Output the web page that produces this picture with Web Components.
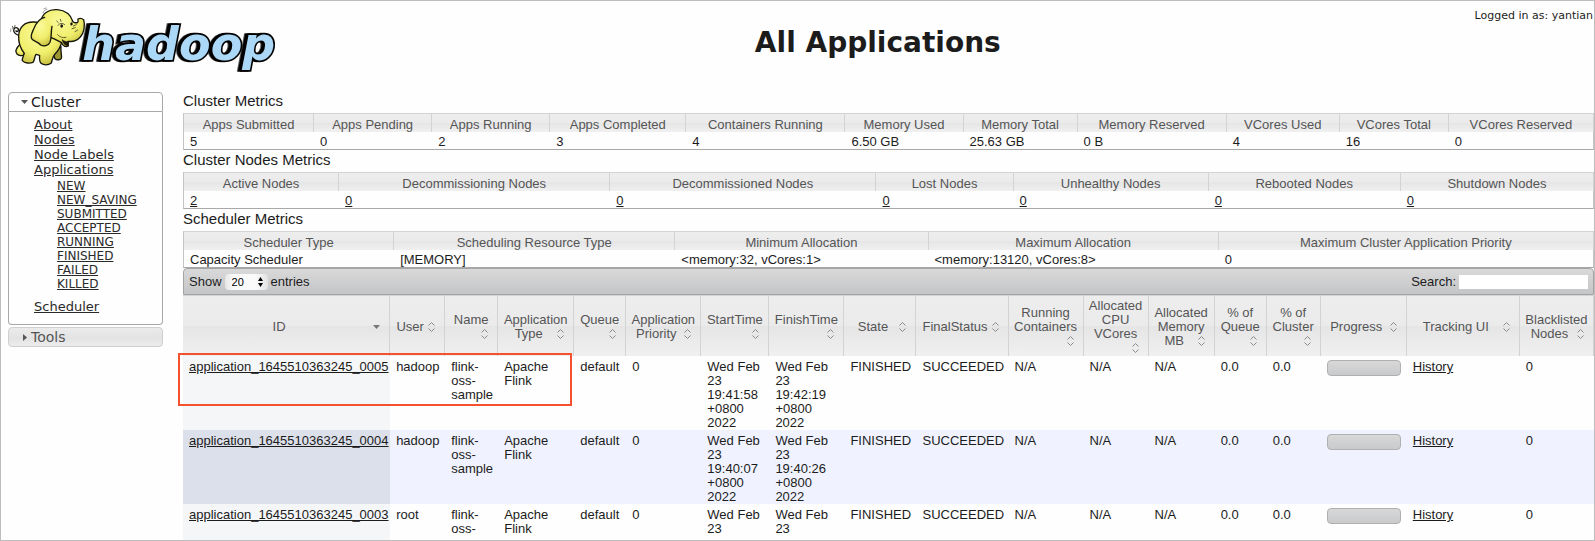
<!DOCTYPE html>
<html lang="en">
<head>
<meta charset="utf-8">
<title>All Applications</title>
<style>
  body {
    margin: 0;
    background: #fefefe;
    color: #1c1c1c;
    font-family: "Liberation Sans", Arial, Helvetica, sans-serif;
    font-size: 13px;
  }
</style>
</head>
<body>
<yarn-page user="yantian">
  <hadoop-logo slot="logo"></hadoop-logo>
  <span slot="title">All Applications</span>
  <nav-accordion slot="nav"></nav-accordion>
  <metrics-table name="cluster"></metrics-table>
  <metrics-table name="nodes"></metrics-table>
  <metrics-table name="scheduler"></metrics-table>
  <apps-table></apps-table>
</yarn-page>

<script>
/**
 * ResourceManager "All Applications" page
 */

const metrics = {
  cluster: {
    title: 'Cluster Metrics',
    columns: [
      { label: 'Apps Submitted', width: 131, value: '5' },
      { label: 'Apps Pending', width: 118, value: '0' },
      { label: 'Apps Running', width: 118, value: '2' },
      { label: 'Apps Completed', width: 136, value: '3' },
      { label: 'Containers Running', width: 159, value: '4' },
      { label: 'Memory Used', width: 118, value: '6.50 GB' },
      { label: 'Memory Total', width: 114, value: '25.63 GB' },
      { label: 'Memory Reserved', width: 149, value: '0 B' },
      { label: 'VCores Used', width: 113, value: '4' },
      { label: 'VCores Total', width: 109, value: '16' },
      { label: 'VCores Reserved', width: 145, value: '0' }
    ]
  },
  nodes: {
    title: 'Cluster Nodes Metrics',
    links: true,
    columns: [
      { label: 'Active Nodes', width: 156, value: '2' },
      { label: 'Decommissioning Nodes', width: 271, value: '0' },
      { label: 'Decommissioned Nodes', width: 266, value: '0' },
      { label: 'Lost Nodes', width: 137, value: '0' },
      { label: 'Unhealthy Nodes', width: 195, value: '0' },
      { label: 'Rebooted Nodes', width: 192, value: '0' },
      { label: 'Shutdown Nodes', width: 193, value: '0' }
    ]
  },
  scheduler: {
    title: 'Scheduler Metrics',
    columns: [
      { label: 'Scheduler Type', width: 211, value: 'Capacity Scheduler' },
      { label: 'Scheduling Resource Type', width: 281, value: '[MEMORY]' },
      { label: 'Minimum Allocation', width: 253, value: '&lt;memory:32, vCores:1&gt;' },
      { label: 'Maximum Allocation', width: 290, value: '&lt;memory:13120, vCores:8&gt;' },
      { label: 'Maximum Cluster Application Priority', width: 375, value: '0' }
    ]
  }
};

const appColumns = [
  ['ID', 207], ['User', 55], ['Name', 53], ['Application Type', 76], ['Queue', 52],
  ['Application Priority', 75], ['StartTime', 68], ['FinishTime', 75], ['State', 72],
  ['FinalStatus', 92], ['Running Containers', 75], ['Allocated CPU VCores', 65],
  ['Allocated Memory MB', 66], ['% of Queue', 52], ['% of Cluster', 54],
  ['Progress', 86], ['Tracking UI', 113], ['Blacklisted Nodes', 74]
];

const apps = [
  {
    id: 'application_1645510363245_0005', user: 'hadoop', name: 'flink-oss-sample',
    start: 'Wed Feb 23 19:41:58 +0800 2022', finish: 'Wed Feb 23 19:42:19 +0800 2022', marked: true
  },
  {
    id: 'application_1645510363245_0004', user: 'hadoop', name: 'flink-oss-sample',
    start: 'Wed Feb 23 19:40:07 +0800 2022', finish: 'Wed Feb 23 19:40:26 +0800 2022'
  },
  {
    id: 'application_1645510363245_0003', user: 'root', name: 'flink-oss-',
    start: 'Wed Feb 23', finish: 'Wed Feb 23'
  }
];

class HadoopLogo extends HTMLElement {
  constructor() {
    super();
    this.attachShadow({ mode: 'open' }).innerHTML = `
      <style>
        :host { display: block; }
        svg { display: block; }
        text {
          font: italic bold 138px "DejaVu Sans", Verdana, sans-serif;
          fill: #abd8f6;
          stroke: #000;
          stroke-width: 10px;
          stroke-linejoin: miter;
          paint-order: stroke;
          filter: drop-shadow(-8px 0 0 #000);
        }
      </style>
      <svg width="280" height="80" viewBox="0 0 840 240" role="img" aria-label="hadoop">
        <defs>
          <radialGradient id="skin" cx="0.45" cy="0.3" r="0.75">
            <stop offset="0" stop-color="#fafa9c"/>
            <stop offset="0.6" stop-color="#f1ee6c"/>
            <stop offset="1" stop-color="#c4bb3c"/>
          </radialGradient>
        </defs>
        <text x="244" y="177">hadoop</text>
        <g fill="url(#skin)" stroke="#15150a" stroke-width="4" stroke-linejoin="round" stroke-linecap="round">
          <!-- tail -->
          <path d="M55 103c-12-2-20-11-16-19 4-7 15-4 13 4-1 5-7 4-7 1" fill="none"/>
          <path d="M38 82l-4-6m7 4l1-7" fill="none" stroke-width="2"/>
          <!-- far legs -->
          <path d="M57 130c-8 8-17 20-9 29 6 6 16 6 21 3l6-26z"/>
          <path d="M152 148l10 25c5 5 16 4 19-1 3-7-3-16-1-35z" fill="#9d9632"/>
          <!-- body and near legs -->
          <path d="M98 63C72 62 54 78 53 104c-1 21 5 38 17 53-3 9-7 15-6 22 7 8 22 9 32 5 6-8 4-17 9-24l11 3c-1 9-1 18 4 24 8 6 22 6 30 0 5-9 2-16 12-28 8-8 16-20 20-35L172 68z"/>
          <!-- head and trunk -->
          <path d="M120 60c4-23 23-36 49-34 23 2 40 15 47 36 5 4 10 4 14 2 3-4 0-7 1-10 5-3 12-2 17 2 5 18 1 40-10 52-10 11-24 15-37 13l1 14c-8 4-17 1-20-10l-24-12c-22-8-39-24-38-53z"/>
          <path d="M184 117c6 4 12 6 18 5l0 11c-9 3-15-5-18-16z" fill="#221c08" stroke-width="2"/>
          <!-- ear -->
          <path d="M131 49c-18 4-26 18-32 33-6 14-12 22-7 31 5 8 18 8 27 19 9 5 23 3 28-8 6-16 2-32 6-48"/>
          <!-- face -->
          <g fill="none" stroke-width="2">
            <path d="M171 73c5-7 14-8 20-2m-19-6l-5-5m13 1l-2-6m-8 46c7 8 15 10 25 8"/>
            <path d="M215 62c-7 1-8 7-5 11m7 2l9-4m-13 12l10-3m-1 12l8-5"/>
          </g>
          <ellipse cx="182" cy="75" rx="4" ry="5" fill="#111" stroke="none"/>
          <ellipse cx="212" cy="69" rx="3" ry="4" fill="#111" stroke="none"/>
          <path d="M126 36c1-6 6-10 12-11m-9-2l7-2M29 92v-8m5 0l1-6" fill="none" stroke="#777" stroke-width="2"/>
        </g>
      </svg>
    `;
  }
}

class YarnPage extends HTMLElement {
  constructor() {
    super();
    this.attachShadow({ mode: 'open' });
  }

  connectedCallback() {
    this.shadowRoot.innerHTML = `
      <style>
        :host {
          display: block;
          box-sizing: border-box;
          height: 100vh;
          overflow: hidden;
          border: 1px solid #bdbdbd;
        }

        header {
          display: flex;
          align-items: flex-start;
          height: 90px;
          font-family: "DejaVu Sans", Verdana, sans-serif;
        }

        h1 {
          flex: 1;
          margin: 0;
          padding-top: 24px;
          font-size: 28px;
          line-height: 36px;
          text-align: center;
        }

        .user {
          padding: 7px 1px 0 0;
          font-size: 11px;
          line-height: 16px;
        }

        .columns {
          display: flex;
          align-items: flex-start;
          gap: 20px;
          padding: 0 0 0 7px;
        }

        nav {
          flex: 0 0 155px;
          padding-top: 1px;
        }

        main {
          flex: 1;
          min-width: 0;
        }
      </style>
      <header>
        <slot name="logo"></slot>
        <h1><slot name="title"></slot></h1>
        <div class="user">Logged in as: ${this.getAttribute('user')}</div>
      </header>
      <div class="columns">
        <nav><slot name="nav"></slot></nav>
        <main><slot></slot></main>
      </div>
    `;
  }
}

class NavAccordion extends HTMLElement {
  constructor() {
    super();
    this.attachShadow({ mode: 'open' });
  }

  connectedCallback() {
    const states = ['NEW', 'NEW_SAVING', 'SUBMITTED', 'ACCEPTED', 'RUNNING', 'FINISHED', 'FAILED', 'KILLED'];
    const link = text => `<li><a href="#">${text}</a></li>`;

    this.shadowRoot.innerHTML = `
      <style>
        :host {
          display: flex;
          flex-direction: column;
          gap: 2px;
          font-family: "DejaVu Sans", Verdana, sans-serif;
        }

        button {
          display: flex;
          align-items: center;
          gap: 3px;
          box-sizing: border-box;
          width: 100%;
          height: 20px;
          margin: 0;
          padding: 0 0 0 12px;
          border: 1px solid #cfcfcf;
          border-radius: 4px;
          background: linear-gradient(#ebebec, #e4e4e5 50%, #e2e2e3 50%, #ececed);
          color: #555;
          font: inherit;
          font-size: 14px;
          text-align: left;
        }

        button.open {
          border-color: #a8a8a8;
          border-radius: 4px 4px 0 0;
          background: #fefefe;
          color: #1c1c1c;
        }

        svg {
          width: 7px;
          height: 7px;
          fill: #555;
        }

        .body {
          padding: 5px 0 10px 25px;
          border: 1px solid #a8a8a8;
          border-top: 0;
          border-radius: 0 0 4px 4px;
        }

        ul {
          margin: 0;
          padding: 0;
          list-style: none;
          font-size: 13px;
          line-height: 15px;
        }

        ul ul {
          padding: 2px 0 8px 23px;
          font-size: 12px;
          line-height: 14px;
        }

        a {
          color: #2a2a2a;
        }
      </style>
      <section>
        <button class="open" aria-expanded="true">
          <svg viewBox="0 0 7 7"><path d="M0 1h7L3.500 5z"/></svg>Cluster
        </button>
        <div class="body">
          <ul>
            ${link('About')}
            ${link('Nodes')}
            ${link('Node Labels')}
            <li><a href="#">Applications</a>
              <ul>${states.map(link).join('')}</ul>
            </li>
            ${link('Scheduler')}
          </ul>
        </div>
      </section>
      <button aria-expanded="false">
        <svg viewBox="0 0 7 7"><path d="M2 0v7l4-3.500z"/></svg>Tools
      </button>
    `;
  }
}

// Header cell look shared by every table on the page
const headerCell = `
  table {
    width: 100%;
    table-layout: fixed;
    border-spacing: 0;
    font-size: 13px;
  }

  th {
    border: solid #d3d3d4;
    border-width: 1px 1px 0 0;
    background: linear-gradient(#ededee, #ebebec 50%, #e5e5e6 50%, #f0f0f1);
    color: #555;
    font-weight: normal;
    text-align: center;
  }

  a { color: #1c1c1c; }
`;

class MetricsTable extends HTMLElement {
  constructor() {
    super();
    this.attachShadow({ mode: 'open' });
  }

  connectedCallback() {
    const { title, links, columns } = metrics[this.getAttribute('name')];
    const cell = value => links ? `<a href="#">${value}</a>` : value;

    this.shadowRoot.innerHTML = `
      <style>
        ${headerCell}

        :host { display: block; }

        h3 {
          margin: 0 0 3px;
          font-size: 15px;
          font-weight: normal;
          line-height: 19px;
        }

        th {
          padding: 3px 0 0;
          line-height: 15px;
        }

        td {
          padding: 2px 6px 0;
          border-bottom: 1px solid #a8a8a8;
          line-height: 15px;
        }

        tr > :first-child { border-left: 1px solid #c4c4c4; }
        td:last-child { border-right: 1px solid #c4c4c4; }
      </style>
      <h3>${title}</h3>
      <table aria-label="${title}">
        <colgroup>${columns.map(c => `<col style="width: ${c.width}px">`).join('')}</colgroup>
        <thead><tr>${columns.map(c => `<th scope="col">${c.label}</th>`).join('')}</tr></thead>
        <tbody><tr>${columns.map(c => `<td>${cell(c.value)}</td>`).join('')}</tr></tbody>
      </table>
    `;
  }
}

class SortIcon extends HTMLElement {
  constructor() {
    super();
    this.attachShadow({ mode: 'open' });
  }

  connectedCallback() {
    const shape = this.hasAttribute('active')
      ? '<path d="M3 5h7L6.500 9z" fill="#777"/>'
      : '<path d="M3.500 5.500l3-3 3 3M3.500 8.500l3 3 3-3" fill="none" stroke="#8a8a8a"/>';
    this.shadowRoot.innerHTML = `
      <style>
        :host { display: block; width: 14px; height: 14px; }
        svg { display: block; }
      </style>
      <svg width="14" height="14" viewBox="0 0 14 14">${shape}</svg>
    `;
  }
}

class ProgressBar extends HTMLElement {
  constructor() {
    super();
    this.attachShadow({ mode: 'open' }).innerHTML = `
      <style>
        :host { display: block; }
        div {
          box-sizing: border-box;
          height: 16px;
          border: 1px solid #b0b0b0;
          border-radius: 4px;
          background: linear-gradient(#d8d8d9, #c9cacb);
        }
      </style>
      <div role="progressbar" aria-label="Progress"></div>
    `;
  }
}

class AppsTable extends HTMLElement {
  constructor() {
    super();
    this.attachShadow({ mode: 'open' });
  }

  connectedCallback() {
    this.shadowRoot.innerHTML = `
      <style>
        ${headerCell}

        :host { display: block; }

        .toolbar {
          display: flex;
          align-items: center;
          justify-content: space-between;
          box-sizing: border-box;
          height: 27px;
          padding: 0 5px;
          border: 1px solid #a4a4a4;
          border-radius: 4px 4px 0 0;
          background: linear-gradient(#d9d9da, #c4c5c6);
        }

        .toolbar label {
          display: flex;
          align-items: center;
          gap: 3px;
        }

        .length {
          display: flex;
          align-items: center;
          border-radius: 4px;
          background: linear-gradient(90deg, #e6e6e6, #fafafa 20%, #fafafa 70%, #e2e2e2);
        }

        select {
          appearance: none;
          width: 33px;
          height: 16px;
          padding: 0 0 0 7px;
          border: 0;
          background: none;
          color: #000;
          font: inherit;
          font-size: 11px;
        }

        input {
          box-sizing: border-box;
          width: 129px;
          height: 14px;
          padding: 0 2px;
          border: 0;
          background: #fff;
          font: inherit;
        }

        th {
          height: 58px;
          padding: 2px 5px 0;
          line-height: 14px;
        }

        th sort-icon { float: right; }

        td {
          height: 70px;
          padding: 4px 6px 0;
          line-height: 14px;
          vertical-align: top;
        }

        td.id {
          position: relative;
          background: #f5f6f8;
          white-space: nowrap;
        }

        tbody tr:nth-child(even) { background: #f0f3ff; }
        tbody tr:nth-child(even) .id { background: #dce0ea; }

        /* outline drawn over the first four cells */
        .mark {
          position: absolute;
          z-index: 1;
          top: -3px;
          left: -5px;
          box-sizing: border-box;
          width: 394px;
          height: 53px;
          border: 2px solid #f4512f;
          pointer-events: none;
        }
      </style>
      <div class="toolbar">
        <label>Show
          <span class="length">
            <select><option>20</option></select>
            <svg width="10" height="10" viewBox="0 0 10 10"><path d="M0 4l2.500-4L5 4zM0 6l2.500 4L5 6z"/></svg>
          </span>
          entries
        </label>
        <label>Search: <input type="text"></label>
      </div>
      <table aria-label="Applications">
        <colgroup>${appColumns.map(([, width]) => `<col style="width: ${width}px">`).join('')}</colgroup>
        <thead><tr>${appColumns.map(([label], i) =>
          `<th scope="col">${label}<sort-icon${i === 0 ? ' active' : ''}></sort-icon></th>`).join('')}</tr></thead>
        <tbody>${apps.map(app => this.row(app)).join('')}</tbody>
      </table>
    `;
  }

  row(app) {
    const mark = app.marked ? '<span class="mark"></span>' : '';
    return `
      <tr>
        <td class="id"><a href="#">${app.id}</a>${mark}</td>
        <td>${app.user}</td>
        <td>${app.name}</td>
        <td>Apache Flink</td>
        <td>default</td>
        <td>0</td>
        <td>${app.start}</td>
        <td>${app.finish}</td>
        <td>FINISHED</td>
        <td>SUCCEEDED</td>
        <td>N/A</td>
        <td>N/A</td>
        <td>N/A</td>
        <td>0.0</td>
        <td>0.0</td>
        <td><progress-bar></progress-bar></td>
        <td><a href="#">History</a></td>
        <td>0</td>
      </tr>`;
  }
}

customElements.define('hadoop-logo', HadoopLogo);
customElements.define('sort-icon', SortIcon);
customElements.define('progress-bar', ProgressBar);
customElements.define('nav-accordion', NavAccordion);
customElements.define('metrics-table', MetricsTable);
customElements.define('apps-table', AppsTable);
customElements.define('yarn-page', YarnPage);
</script>
</body>
</html>
